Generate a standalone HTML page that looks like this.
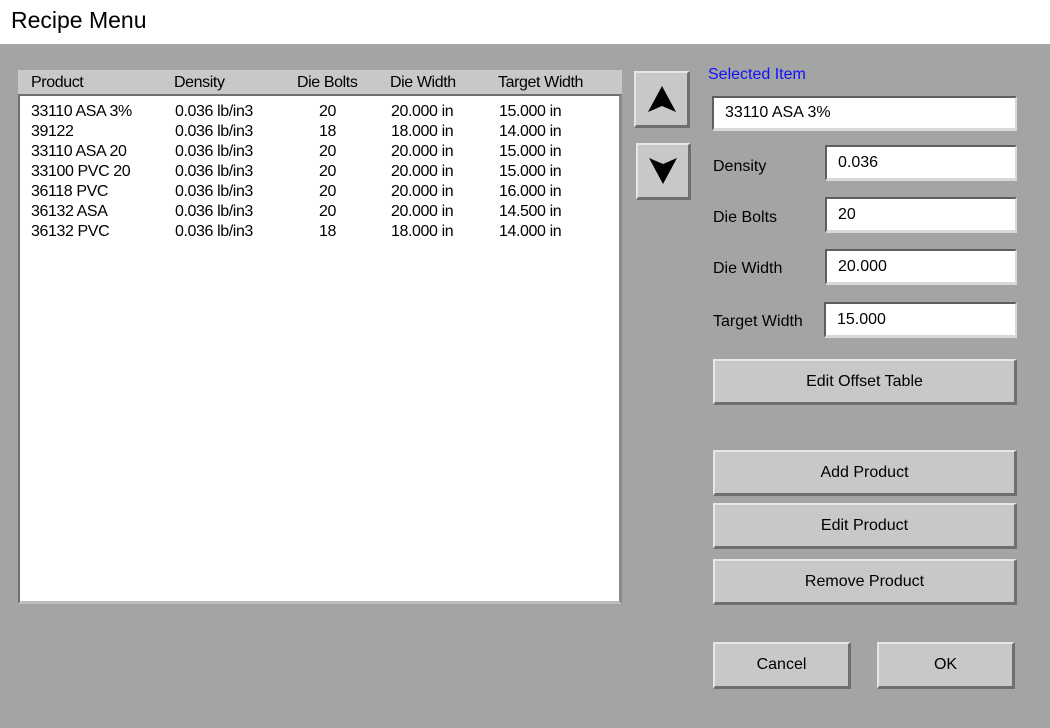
<!DOCTYPE html>
<html><head><style>
body{margin:0;width:1050px;height:728px;background:#a3a5a4;font-family:"Liberation Sans",sans-serif;position:relative;overflow:hidden}
.a{position:absolute}
.hdr{left:0;top:0;width:1050px;height:44px;background:#fff}
.hdr span{position:absolute;left:11px;top:7px;font-size:23px;color:#000}
.btn{position:absolute;background:#c9c7c9;border-style:solid;border-width:2px 3px 3px 2px;border-color:#e6e6e6 #6f6f6f #6f6f6f #e6e6e6;box-sizing:border-box;display:flex;align-items:center;justify-content:center;font-size:16px;color:#000}
.inp{position:absolute;background:#fff;border-style:solid;border-width:2px 2px 3px 2px;border-color:#5e5e5e #d8d8d8 #d8d8d8 #5e5e5e;box-sizing:border-box;font-size:16px;padding-left:11px;display:flex;align-items:center}
.lbl{position:absolute;font-size:16px;color:#000}
.tbl{left:18px;top:70px;width:604px;height:534px;box-sizing:border-box}
.th{position:absolute;left:0;top:0;width:604px;height:24px;background:#c9c7c9}
.body{position:absolute;left:0;top:24px;width:604px;height:510px;background:#fff;box-sizing:border-box;border-style:solid;border-width:2px 3px 3px 2px;border-color:#6f6f6f #8a8a8a #bdbdbd #6f6f6f}
.c{position:absolute;font-size:16px;letter-spacing:-0.4px;white-space:nowrap}
</style></head><body>
<div class="a hdr"><span>Recipe Menu</span></div>
<div class="a tbl">
<div class="th">
<span class="c" style="left:13px;top:4px">Product</span>
<span class="c" style="left:156px;top:4px">Density</span>
<span class="c" style="left:279px;top:4px">Die Bolts</span>
<span class="c" style="left:372px;top:4px">Die Width</span>
<span class="c" style="left:480px;top:4px">Target Width</span>
</div>
<div class="body"></div>
</div>
<div class="a" style="left:31px;top:102px;line-height:20px;font-size:16px;letter-spacing:-0.4px">
<div style="position:absolute;left:0;white-space:nowrap">33110 ASA 3%<br>39122<br>33110 ASA 20<br>33100 PVC 20<br>36118 PVC<br>36132 ASA<br>36132 PVC</div>
<div style="position:absolute;left:144px;white-space:nowrap">0.036 lb/in3<br>0.036 lb/in3<br>0.036 lb/in3<br>0.036 lb/in3<br>0.036 lb/in3<br>0.036 lb/in3<br>0.036 lb/in3</div>
<div style="position:absolute;left:288px;white-space:nowrap">20<br>18<br>20<br>20<br>20<br>20<br>18</div>
<div style="position:absolute;left:360px;white-space:nowrap">20.000 in<br>18.000 in<br>20.000 in<br>20.000 in<br>20.000 in<br>20.000 in<br>18.000 in</div>
<div style="position:absolute;left:468px;white-space:nowrap">15.000 in<br>14.000 in<br>15.000 in<br>15.000 in<br>16.000 in<br>14.500 in<br>14.000 in</div>
</div>
<div class="btn" style="left:634px;top:71px;width:56px;height:57px"><svg width="28" height="26"><polygon points="14,0 28,26 14,20 0,26" fill="#000"/></svg></div>
<div class="btn" style="left:636px;top:143px;width:55px;height:57px"><svg width="28" height="26"><polygon points="0,0 14,6 28,0 14,26" fill="#000"/></svg></div>
<div class="lbl" style="left:708px;top:66px;color:#1010ff;font-size:16px">Selected Item</div>
<div class="inp" style="left:712px;top:96px;width:305px;height:35px">33110 ASA 3%</div>
<div class="lbl" style="left:713px;top:158px">Density</div>
<div class="inp" style="left:825px;top:145px;width:192px;height:36px">0.036</div>
<div class="lbl" style="left:713px;top:209px">Die Bolts</div>
<div class="inp" style="left:825px;top:197px;width:192px;height:36px">20</div>
<div class="lbl" style="left:713px;top:260px">Die Width</div>
<div class="inp" style="left:825px;top:249px;width:192px;height:36px">20.000</div>
<div class="lbl" style="left:713px;top:313px">Target Width</div>
<div class="inp" style="left:824px;top:302px;width:193px;height:36px">15.000</div>
<div class="btn" style="left:713px;top:359px;width:304px;height:46px">Edit Offset Table</div>
<div class="btn" style="left:713px;top:450px;width:304px;height:46px">Add Product</div>
<div class="btn" style="left:713px;top:503px;width:304px;height:46px">Edit Product</div>
<div class="btn" style="left:713px;top:559px;width:304px;height:46px">Remove Product</div>
<div class="btn" style="left:713px;top:642px;width:138px;height:47px">Cancel</div>
<div class="btn" style="left:877px;top:642px;width:138px;height:47px">OK</div>
</body></html>
